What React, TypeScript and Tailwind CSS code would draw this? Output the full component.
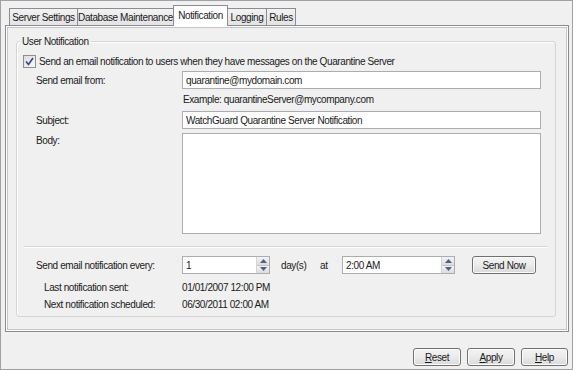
import React from 'react';

const tabs = [
  { t: 'Server Settings', w: 'w-[69px]' },
  { t: 'Database Maintenance', w: 'w-[97px]' },
  { t: 'Notification', w: 'w-[55px]' },
  { t: 'Logging', w: 'w-[40px]' },
  { t: 'Rules', w: 'w-[30px]' },
];

const Spinner = () => (
  <div className="flex flex-col w-[13px] h-[16px] border-l border-[#d4d4d4]">
    <div className="flex-1 flex items-center justify-center bg-gradient-to-b from-[#f4f4f4] to-[#dcdcdc] border-b border-[#c4c4c4]">
      <svg width="7" height="4" viewBox="0 0 7 4"><path d="M0 4 L3.5 0 L7 4 Z" fill="#4d6185" /></svg>
    </div>
    <div className="flex-1 flex items-center justify-center bg-gradient-to-b from-[#f4f4f4] to-[#dcdcdc]">
      <svg width="7" height="4" viewBox="0 0 7 4"><path d="M0 0 L3.5 4 L7 0 Z" fill="#4d6185" /></svg>
    </div>
  </div>
);

const Btn = ({ children, w = 'w-[48px]' }: { children: React.ReactNode; w?: string }) => (
  <div className={`${w} h-[18px] flex items-center justify-center rounded-[3px] border border-[#707070] bg-gradient-to-b from-[#f3f3f3] via-[#ebebeb] to-[#d9d9d9] shadow-[inset_0_0_0_1px_#fcfcfc]`}>
    {children}
  </div>
);

export default function App() {
  return (
    <div
      className="w-[573px] h-[370px] bg-[#f0f0f0] border border-[#a0a0a0] flex flex-col text-[10px] leading-[13px] tracking-[-0.4px] text-[#1a1a1a]"
      style={{ fontFamily: '"Liberation Sans", Arial, sans-serif' }}
    >
      {/* tabs */}
      <div className="flex items-end h-[24px] pl-[8px] pt-[4px]">
        {tabs.map(({ t, w }) =>
          t === 'Notification' ? (
            <div key={t} className={`${w} h-[21px] -mb-px -mr-px relative z-10 pt-[3px] text-center bg-white border border-b-0 border-[#898c95]`}>
              {t}
            </div>
          ) : (
            <div key={t} className={`${w} h-[17px] -mr-px pt-[2px] text-center bg-gradient-to-b from-[#f2f2f2] to-[#e3e3e3] border border-b-0 border-[#898c95]`}>
              {t}
            </div>
          )
        )}
      </div>

      {/* panel */}
      <div className="ml-[4px] w-[564px] h-[307px] border border-[#898c95] p-px bg-white">
        <div className="h-full border border-[#c5c5c5] bg-[#f0f0f0] pt-[13px] pl-[8px]">
          {/* group box */}
          <div className="relative w-[540px] h-[276px] border border-[#d5d5d5] rounded-[3px] shadow-[inset_1px_1px_0_#ffffff]">
            <div className="absolute -top-[7px] left-[3px] px-[2px] bg-[#f0f0f0]">User Notification</div>

            <div className="mt-[13px] ml-[6px] h-[13px] flex items-center gap-[3px]">
              <div className="w-[13px] h-[13px] border border-[#8e8f8f] bg-gradient-to-br from-[#dcdcdc] to-[#fafafa] flex items-center justify-center">
                <svg width="9" height="9" viewBox="0 0 9 9">
                  <path d="M1 4.5 L3.5 7.5 L8 1" stroke="#2a4a8c" strokeWidth="1.6" fill="none" />
                </svg>
              </div>
              <span>Send an email notification to users when they have messages on the Quarantine Server</span>
            </div>

            <div className="mt-[3px] pl-[19px] flex items-center h-[18px]">
              <div className="w-[146px]">Send email from:</div>
              <div className="w-[359px] h-[18px] border border-[#abadb3] bg-white px-[3px] flex items-center">
                quarantine@mydomain.com
              </div>
            </div>

            <div className="mt-[4px] pl-[166px]">Example: quarantineServer@mycompany.com</div>

            <div className="mt-[5px] pl-[19px] flex items-center h-[18px]">
              <div className="w-[146px]">Subject:</div>
              <div className="w-[359px] h-[18px] border border-[#abadb3] bg-white px-[3px] flex items-center">
                WatchGuard Quarantine Server Notification
              </div>
            </div>

            <div className="mt-[4px] pl-[19px] flex items-start">
              <div className="w-[146px] pt-[1px]">Body:</div>
              <div className="w-[359px] h-[101px] border border-[#abadb3] bg-white" />
            </div>

            <div className="mt-[12px] ml-[7px] w-[523px] h-[2px] border-t border-[#d5d5d5] border-b border-b-white" />

            <div className="mt-[8px] pl-[19px] flex items-center h-[18px]">
              <div className="w-[146px]">Send email notification every:</div>
              <div className="w-[88px] h-[18px] border border-[#abadb3] bg-white flex items-center justify-between pl-[3px]">
                <span>1</span>
                <Spinner />
              </div>
              <div className="ml-[11px] w-[39px]">day(s)</div>
              <div className="w-[22px]">at</div>
              <div className="w-[113px] h-[18px] border border-[#abadb3] bg-white flex items-center justify-between pl-[3px]">
                <span>2:00 AM</span>
                <Spinner />
              </div>
              <div className="ml-[17px]">
                <Btn w="w-[64px]">Send Now</Btn>
              </div>
            </div>

            <div className="mt-[7px] pl-[27px] flex">
              <div className="w-[138px]">Last notification sent:</div>
              <div>01/01/2007 12:00 PM</div>
            </div>
            <div className="mt-[4px] pl-[27px] flex">
              <div className="w-[138px]">Next notification scheduled:</div>
              <div>06/30/2011 02:00 AM</div>
            </div>
          </div>
        </div>
      </div>

      {/* bottom buttons */}
      <div className="flex-1 flex items-end justify-end gap-[6px] pr-[4px] pb-[3px]">
        <Btn><span><u>R</u>eset</span></Btn>
        <Btn><span><u>A</u>pply</span></Btn>
        <Btn w="w-[47px]"><span><u>H</u>elp</span></Btn>
      </div>
    </div>
  );
}
